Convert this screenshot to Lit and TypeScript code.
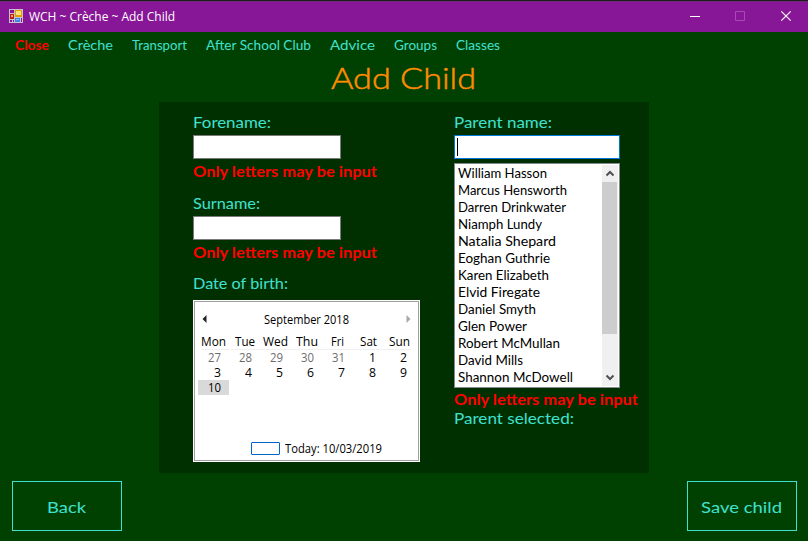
import { LitElement, html, css, svg } from "lit";
import { customElement, property } from "lit/decorators.js";
import { classMap } from "lit/directives/class-map.js";

/** One line of text stretched horizontally to fill a given width. */
@customElement("fit-text")
class FitText extends LitElement {
  @property() text = "";
  @property({ type: Number }) width = 0;

  static styles = css`
    :host { display: block; white-space: nowrap; }
    .line { display: inline-block; vertical-align: top; white-space: pre; transform-origin: 0 0; }
  `;

  render() {
    return html`<span class="line">${this.text}</span>`;
  }

  updated() {
    const line = this.renderRoot.querySelector<HTMLElement>(".line")!;
    line.style.transform = "none";
    const natural = line.getBoundingClientRect().width;
    if (this.width && natural) line.style.transform = `scaleX(${this.width / natural})`;
    this.style.width = `${this.width}px`;
  }
}

const MENU: [string, number, number][] = [
  ["Close", 34, 53], ["Crèche", 45, 64], ["Transport", 55, 74], ["After School Club", 105, 124],
  ["Advice", 45, 64], ["Groups", 43, 62], ["Classes", 44, 63],
];
const PARENTS: [string, number][] = [
  ["William Hasson", 89], ["Marcus Hensworth", 109], ["Darren Drinkwater", 108],
  ["Niamph Lundy", 84], ["Natalia Shepard", 98], ["Eoghan Guthrie", 92],
  ["Karen Elizabeth", 91], ["Elvid Firegate", 82], ["Daniel Smyth", 78],
  ["Glen Power", 69], ["Robert McMullan", 102], ["David Mills", 65],
  ["Shannon McDowell", 115],
];
const WEEKDAYS: [string, number][] = [
  ["Mon", 25], ["Tue", 20], ["Wed", 25], ["Thu", 22], ["Fri", 13], ["Sat", 17], ["Sun", 21],
];
const DAYS = [27, 28, 29, 30, 31, 1, 2, 3, 4, 5, 6, 7, 8, 9, 10];
const WARNING = "Only letters may be input";

@customElement("app-root")
class AppRoot extends LitElement {
  static styles = css`
    :host {
      display: flex; flex-direction: column; width: 808px; height: 541px; box-sizing: border-box;
      overflow: hidden; background: #004000; color: #40e0d0;
      font: 400 15px/20px Lato, "Liberation Sans", sans-serif;
    }
    svg { display: block; }
    .titlebar {
      display: flex; height: 30px; flex: none; background: #881798; color: #fff;
      border-top: 1px solid #1c1c1c; box-shadow: inset 0 1px #6d2a78; padding-top: 1px;
      box-sizing: content-box;
      font: 12px/30px "Open Sans", "Noto Sans", sans-serif;
    }
    .logo { margin: 7px 6px 0 9px; }
    .controls { margin-left: auto; }
    .menu { display: flex; flex: none; height: 28px; padding-left: 15px; font-size: 12.5px; line-height: 28px; }
    .close { color: #f00; font-weight: 700; }
    .heading {
      flex: none; height: 42px; margin: 0 0 0 331px; font-size: 30px; line-height: 35px;
      font-weight: 300; color: #ff8c00; -webkit-text-stroke: 0.5px #ff8c00;
    }
    .panel {
      display: flex; flex: none; width: 490px; height: 371px; margin-left: 159px;
      box-sizing: border-box; padding: 10px 0 0 34px; background: #003000;
    }
    .left { width: 261px; }
    .field {
      box-sizing: border-box; width: 148px; height: 24px; margin-top: 3px;
      background: #fff; border: 1px solid #7a7a7a;
    }
    .wide { width: 166px; border-color: #0078d7; padding: 2px; }
    .caret { width: 1px; height: 18px; background: #000; }
    .warning { height: 20px; margin-top: 2px; color: #f00; font-weight: 700; font-size: 15px; }
    .second { margin-top: 12px; }
    .third { margin-top: 11px; }
    .list {
      display: flex; justify-content: space-between; box-sizing: border-box; width: 166px; height: 225px;
      margin-top: 4px; padding: 1px 1px 1px 3px; border: 1px solid #828790; background: #fff;
    }
    .names { color: #000; font-size: 12.5px; line-height: 17px; }
    .scroll { display: flex; flex-direction: column; width: 16px; background: #f0f0f0; }
    .thumb { height: 152px; width: 15px; background: #cdcdcd; }
    .down { margin-top: auto; }
    .under { margin-top: 1px; }
    .selected { margin-top: -1px; }
    .calendar {
      box-sizing: border-box; width: 227px; height: 162px; margin-top: 7px; padding: 1px;
      background: #fff; color: #000; font: 12px/15px "Open Sans", "Noto Sans", sans-serif;
    }
    .inner { box-sizing: border-box; height: 160px; border: 1px solid #a0a0a0; padding: 9px 3px 0; }
    .month { display: flex; justify-content: space-between; align-items: flex-start; height: 23px; padding: 0 4px 0 4px; }
    .arrow { margin-top: 4px; }
    .month fit-text { margin-top: 1px; }
    .days { display: grid; grid-template-columns: repeat(7, 31px); }
    .weekday { display: flex; justify-content: center; height: 15px; }
    .rule { height: 1px; margin: 0 4px; background: #f0f0f0; }
    .day { display: flex; justify-content: flex-end; padding-right: 8px; height: 15px; }
    .muted { color: #6d6d6d; }
    .picked { background: #d9d9d9; }
    .today { display: flex; margin: 46px 0 0 53px; }
    .mark { box-sizing: border-box; width: 29px; height: 13px; margin: 1px 5px 0 0; border: 1px solid #0066cc; border-radius: 1px; }
    .actions { display: flex; justify-content: space-between; padding: 8px 11px 0 12px; }
    .button {
      display: flex; box-sizing: border-box; justify-content: center; width: 110px; height: 50px;
      padding-right: 2px; border: 1px solid #40e0d0; font-size: 16px; line-height: 49px;
    }
  `;

  render() {
    return html`
      <header class="titlebar">
        <svg class="logo" width="14" height="14" viewBox="0 0 14 14">
          <path fill="#c9bfce" d="M0 0h14v14H0z" />
          <path fill="#881798" d="M1 1h4v3H1zM1 11h2v2H1zM4 11h1v2H4zM12 9h1v4h-1z" />
          <path fill="#b5230f" d="M1 5h4v5H1z" /><path fill="#ff9c7a" d="M2 6h2v2H2z" />
          <path fill="#e0a000" d="M6 1h7v7H6z" /><path fill="#ffe27a" d="M7 2h5v4H7z" />
          <path fill="#3a86e0" d="M6 9h5v4H6z" /><path fill="#8cc4ff" d="M7 10h3v1H7z" />
        </svg>
        <fit-text text="WCH ~ Crèche ~ Add Child" width="146"></fit-text>
        <svg class="controls" width="128" height="30" viewBox="0 0 128 30" fill="none">
          <path stroke="#fff" d="M10 14.5h10" />
          <path stroke="#a54ab1" d="M55.500 9.500h9v9h-9z" />
          <path stroke="#fff" stroke-width="1.200" d="M101.300 9.300l9.400 9.400M110.700 9.300l-9.400 9.400" />
        </svg>
      </header>
      <nav class="menu">
        ${MENU.map(([name, width, pitch], i) => html`<div style="width:${pitch}px">
          <fit-text class=${classMap({ close: i === 0 })} .text=${name} .width=${width}></fit-text>
        </div>`)}
      </nav>
      <fit-text class="heading" text="Add Child" width="145"></fit-text>
      <main class="panel">
        <section class="left">
          <fit-text text="Forename:" width="78"></fit-text>
          <div class="field"></div>
          <fit-text class="warning" .text=${WARNING} width="184"></fit-text>
          <fit-text class="second" text="Surname:" width="67"></fit-text>
          <div class="field"></div>
          <fit-text class="warning" .text=${WARNING} width="184"></fit-text>
          <fit-text class="third" text="Date of birth:" width="95"></fit-text>
          ${this.calendar()}
        </section>
        <section>
          <fit-text text="Parent name:" width="98"></fit-text>
          <div class="field wide"><div class="caret"></div></div>
          <div class="list">
            <div class="names">
              ${PARENTS.map(([name, width]) => html`<fit-text .text=${name} .width=${width}></fit-text>`)}
            </div>
            <div class="scroll">
              ${this.chevron("M4.500 10.500l3.500-3.500 3.500 3.500", false)}
              <div class="thumb"></div>
              ${this.chevron("M4.500 6.500l3.500 3.500 3.500-3.500", true)}
            </div>
          </div>
          <fit-text class="warning under" .text=${WARNING} width="184"></fit-text>
          <fit-text class="selected" text="Parent selected:" width="120"></fit-text>
        </section>
      </main>
      <footer class="actions">
        <div class="button"><fit-text text="Back" width="39"></fit-text></div>
        <div class="button"><fit-text text="Save child" width="81"></fit-text></div>
      </footer>
    `;
  }

  private chevron(d: string, down: boolean) {
    return html`<svg class=${classMap({ down })} width="16" height="17" viewBox="0 0 16 17">
      ${svg`<path d=${d} fill="none" stroke="#505050" stroke-width="2" />`}
    </svg>`;
  }

  private calendar() {
    return html`<div class="calendar"><div class="inner">
      <div class="month">
        <svg class="arrow" width="5" height="8" viewBox="0 0 5 8"><path d="M4.500 0v8L.5 4z" fill="#222" /></svg>
        <fit-text text="September 2018" width="85"></fit-text>
        <svg class="arrow" width="5" height="8" viewBox="0 0 5 8"><path d="M.5 0v8l4-4z" fill="#a8a8a8" /></svg>
      </div>
      <div class="days">
        ${WEEKDAYS.map(([d, w]) => html`<div class="weekday"><fit-text .text=${d} .width=${w}></fit-text></div>`)}
      </div>
      <div class="rule"></div>
      <div class="days">
        ${DAYS.map((d, i) => html`<div class=${classMap({ day: true, muted: i < 5, picked: i === 14 })}>
          <fit-text .text=${String(d)} .width=${d > 9 ? 13 : 7}></fit-text>
        </div>`)}
      </div>
      <div class="today"><div class="mark"></div><fit-text text="Today: 10/03/2019" width="97"></fit-text></div>
    </div></div>`;
  }
}
